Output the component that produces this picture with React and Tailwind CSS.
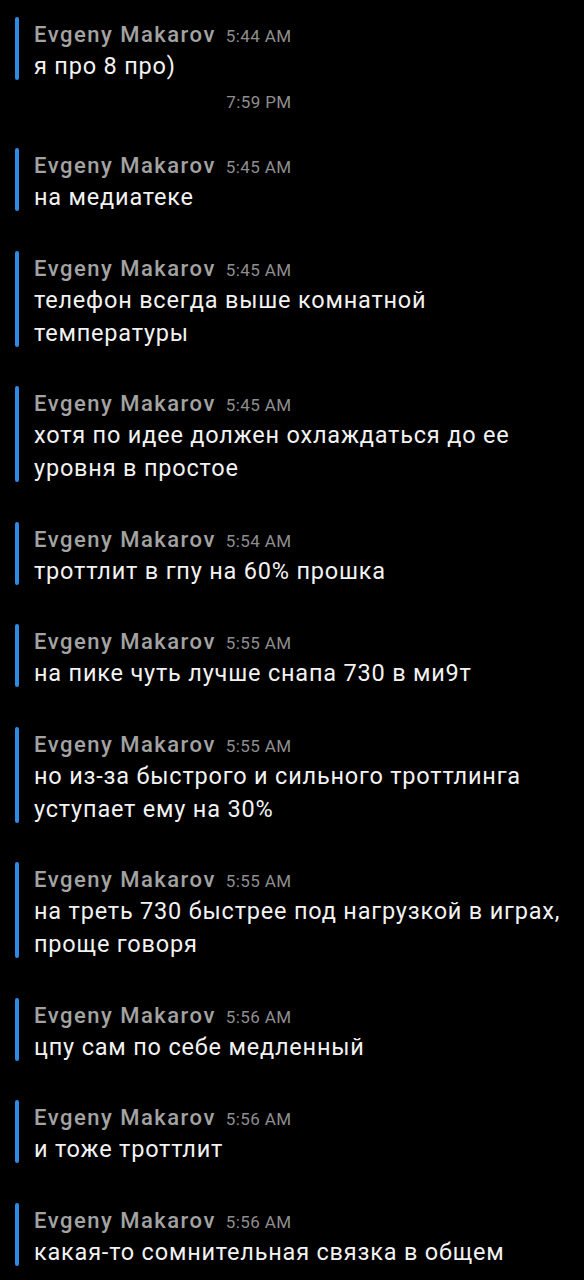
import React from 'react';

const messages = [
  { time: '5:44 AM', lines: ['я про 8 про)'], sent: '7:59 PM' },
  { time: '5:45 AM', lines: ['на медиатеке'] },
  { time: '5:45 AM', lines: ['телефон всегда выше комнатной', 'температуры'] },
  { time: '5:45 AM', lines: ['хотя по идее должен охлаждаться до ее', 'уровня в простое'] },
  { time: '5:54 AM', lines: ['троттлит в гпу на 60% прошка'] },
  { time: '5:55 AM', lines: ['на пике чуть лучше снапа 730 в ми9т'] },
  { time: '5:55 AM', lines: ['но из-за быстрого и сильного троттлинга', 'уступает ему на 30%'] },
  { time: '5:55 AM', lines: ['на треть 730 быстрее под нагрузкой в играх,', 'проще говоря'] },
  { time: '5:56 AM', lines: ['цпу сам по себе медленный'] },
  { time: '5:56 AM', lines: ['и тоже троттлит'] },
  { time: '5:56 AM', lines: ['какая-то сомнительная связка в общем'] },
];

function Quote({ msg }) {
  return (
    <div className="flex items-start mb-[36.5px]">
      <div
        className="w-[4px] rounded-full bg-[#2d8be3] ml-[15px] shrink-0"
        style={{ height: 63 + (msg.lines.length - 1) * 33 }}
      />
      <div className="flex flex-col w-fit ml-[15px] mt-[3px]">
        <div className="flex items-baseline h-[30px] leading-[30px]">
          <span className="text-[22px] font-medium tracking-[1.5px] text-[#a3a3a3]">Evgeny Makarov</span>
          <span className="ml-[10px] text-[17px] tracking-[0.4px] text-[#8e8e8e]">{msg.time}</span>
        </div>
        {msg.lines.map((line, i) => (
          <div key={i} className="text-[23.5px] tracking-[0.8px] leading-[33px] text-[#f2f2f2] whitespace-nowrap">
            {line}
          </div>
        ))}
        {msg.sent && (
          <div className="self-end mt-[9.5px] h-[19px] leading-[19px] text-[17px] tracking-[0.4px] text-[#8e8e8e]">
            {msg.sent}
          </div>
        )}
      </div>
    </div>
  );
}

export default function App() {
  return (
    <div
      className="w-[584px] h-[1280px] overflow-hidden bg-black pt-[17px]"
      style={{ fontFamily: 'Roboto, "Noto Sans", sans-serif' }}
    >
      {messages.map((m, i) => (
        <Quote key={i} msg={m} />
      ))}
    </div>
  );
}
